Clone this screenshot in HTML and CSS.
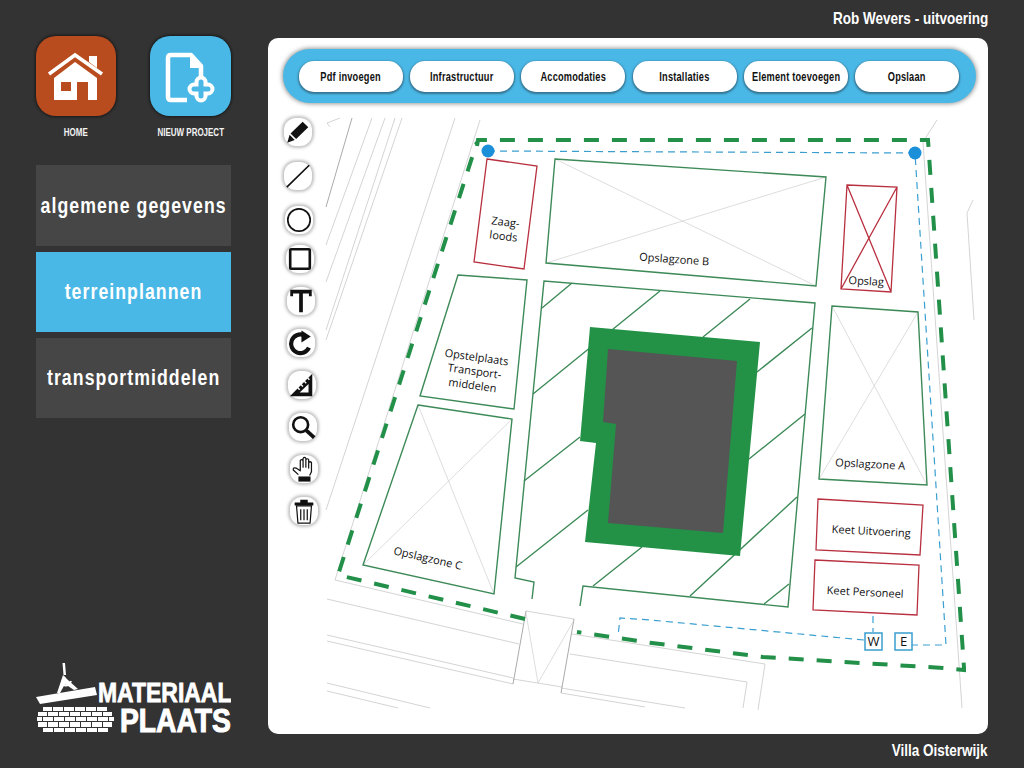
FILE: index.html
```html
<!DOCTYPE html>
<html lang="nl">
<head>
<meta charset="utf-8">
<title>Materiaalplaats - terreinplannen</title>
<link rel="stylesheet" href="styles.css">
</head>
<body>
<div class="app">
  <aside class="sidebar">
    <div class="quick">
      <a class="quick-item">
        <span class="tile tile-home">
          <svg viewBox="36 36 80 80" width="80" height="80">
            <path class="white" d="M54 78 L75 62 L97 78 V100 H88 V82 H77 V100 H54 Z M61 82 V91 H71 V82 Z" fill-rule="evenodd"/>
            <path class="white" d="M89 56 H97 V68 L89 62 Z"/>
            <path class="roof" d="M49 74 L75 55 L102 74"/>
          </svg>
        </span>
        <span class="quick-label"><span class="squeeze">HOME</span></span>
      </a>
      <a class="quick-item quick-new">
        <span class="tile tile-new">
          <svg viewBox="150 36 81 80" width="81" height="80">
            <path class="doc" d="M187 100 H171 Q168 100 168 97 V58 Q168 55 171 55 H191 L201 66 V77"/>
            <path class="white" d="M190 54 L203 68 H190 Z"/>
            <path class="plus-out" d="M201 82 V96 M194 89 H208"/>
            <path class="plus-in" d="M201 82 V96 M194 89 H208"/>
          </svg>
        </span>
        <span class="quick-label"><span class="squeeze">NIEUW PROJECT</span></span>
      </a>
    </div>
    <nav class="menu">
      <a class="menu-item menu-first"><span class="menu-text">algemene gegevens</span></a>
      <a class="menu-item is-active"><span class="menu-text">terreinplannen</span></a>
      <a class="menu-item"><span class="menu-text">transportmiddelen</span></a>
    </nav>
    <svg class="logo" viewBox="36 660 195 84" width="195" height="84">
      <g class="white">
        <path d="M36 697 L95 687 L97 695 L40 704 Z"/>
        <path d="M62.500 663 L65 663 L66 675 L63.500 675 Z"/>
        <path d="M63 675 L57 693 L60 693 L65 684 L74 690 L78 689 L68 680 Z"/>
        <path class="hook" d="M65 677 Q60 682 64 685 Q69 687 71 681"/>
        <g>
          <rect x="43" y="707" width="9" height="4"/><rect x="53" y="707" width="10" height="4"/><rect x="64" y="707" width="10" height="4"/><rect x="75" y="707" width="10" height="4"/><rect x="86" y="707" width="10" height="4"/><rect x="97" y="707" width="10" height="4"/>
          <rect x="38" y="712" width="9" height="4"/><rect x="48" y="712" width="10" height="4"/><rect x="59" y="712" width="10" height="4"/><rect x="70" y="712" width="10" height="4"/><rect x="81" y="712" width="10" height="4"/><rect x="92" y="712" width="10" height="4"/><rect x="103" y="712" width="9" height="4"/>
          <rect x="37" y="717" width="5" height="4"/><rect x="43" y="717" width="10" height="4"/><rect x="54" y="717" width="10" height="4"/><rect x="65" y="717" width="10" height="4"/><rect x="76" y="717" width="10" height="4"/><rect x="87" y="717" width="10" height="4"/><rect x="98" y="717" width="10" height="4"/><rect x="109" y="717" width="5" height="4"/>
          <rect x="38" y="722" width="9" height="5"/><rect x="48" y="722" width="10" height="5"/><rect x="59" y="722" width="10" height="5"/><rect x="70" y="722" width="10" height="5"/><rect x="81" y="722" width="10" height="5"/><rect x="92" y="722" width="10" height="5"/><rect x="103" y="722" width="9" height="5"/>
          <rect x="43" y="728" width="10" height="4"/><rect x="54" y="728" width="10" height="4"/><rect x="65" y="728" width="10" height="4"/><rect x="76" y="728" width="10" height="4"/><rect x="87" y="728" width="10" height="4"/><rect x="98" y="728" width="10" height="4"/>
        </g>
      </g>
      <text class="logo-text logo-one" transform="translate(98 702) scale(0.835 1)">MATERIAAL</text>
      <text class="logo-text logo-two" transform="translate(120 732) scale(0.83 1)">PLAATS</text>
    </svg>
  </aside>

  <header class="topline"><span class="edge-text">Rob Wevers - uitvoering</span></header>

  <main class="panel">
    <div class="toolbar-wrap">
      <div class="toolbar">
        <button class="pill"><span class="pill-text">Pdf invoegen</span></button>
        <button class="pill"><span class="pill-text">Infrastructuur</span></button>
        <button class="pill"><span class="pill-text">Accomodaties</span></button>
        <button class="pill"><span class="pill-text">Installaties</span></button>
        <button class="pill"><span class="pill-text">Element toevoegen</span></button>
        <button class="pill"><span class="pill-text">Opslaan</span></button>
      </div>
    </div>
    <div class="stage">
      <svg class="map" viewBox="268 103 720 631" width="720" height="631">
        <g class="ctx">
          <path class="ctx-dark" d="M352 118 L326 207"/>
          <path d="M327 123 L340 118 M327 123 L330 127"/>
          <path d="M372 118 L326 245 M385 118 L326 282 M395 118 L326 330 M402 118 L326 340"/>
          <path d="M455 118 L326 510"/>
          <path d="M480 120 L335 580 L523 624"/>
          <path d="M937 120 L923 142 L962 708"/>
          <path d="M973 200 L967 213 L974 320"/>
          <path d="M327 599 L519 644 M327 635 L513 678 M327 641 L513 684"/>
          <path d="M327 683 L430 708 M327 691 L398 708"/>
          <path d="M526 611 L574 619 M513 679 L562 687"/>
          <path class="ctx-dark" d="M526 611 L513 684 M574 619 L561 693"/>
          <path class="ctx-light" d="M526 613 L538 683 L574 620"/>
          <path d="M572 634 L765 664 L758 710 M570 654 L747 682 L743 708"/>
          <path d="M561 688 L685 708 M561 693 L645 707"/>
          <path class="ctx-light" d="M555 159 L816 286 M826 177 L546 263"/>
          <path class="ctx-light" d="M832 306 L927 485 M918 312 L819 479"/>
          <path class="ctx-light" d="M418 405 L494 594 M512 419 L363 565"/>
        </g>

        <g class="zone">
          <path d="M555 159 L826 177 L816 286 L546 263 Z"/>
          <path d="M832 306 L918 312 L927 485 L819 479 Z"/>
          <path d="M458 275 L527 280 L514 409 L420 396 Z"/>
          <path d="M418 405 L512 419 L494 594 L363 565 Z"/>
          <path d="M532 599 L534 582 L515 578 L544 281 L815 303 L788 607 L583 586 L580 606"/>
          <path d="M542 308 L572 283 M533 394 L660 291 M703 337 L750 299 M757 372 L812 328 M524 481 L580 437 M516 567 L588 510 M593 586 L642 547 M749 459 L805 414 M690 596 L797 497 M764 604 L789 584"/>
        </g>

        <path class="building" d="M590 327 L760 342 L740 556 L585 542 L596 443 L580 441 Z"/>
        <path class="core" d="M608 349 L737 361 L723 533 L608 523 L616 424 L603 422 Z"/>

        <g class="shed">
          <path d="M487 159 L537 166 L524 269 L474 262 Z"/>
          <path d="M847 185 L897 187 L891 292 L841 289 Z M847 185 L891 292 M897 187 L841 289"/>
          <path d="M818 499 L923 505 L920 555 L816 550 Z"/>
          <path d="M815 560 L919 565 L917 615 L813 610 Z"/>
        </g>

        <path class="fence" d="M477 146 L478 140 H926 L928 140 L964 668 V670 L943 668 L763 657 L652 643 L577 632"/>
        <path class="fence" d="M525 619 L338 575 L477 142"/>

        <path class="route" d="M488 151 L915 153 L946 645 L912 645"/>
        <path class="route" d="M864 640 L650 620 L620 618 L618 636"/>
        <path class="route" d="M873 616 L873 632"/>
        <circle class="pin" cx="488" cy="151" r="6.500"/>
        <circle class="pin" cx="915" cy="153" r="6.500"/>
        <rect class="box" x="865" y="633" width="17" height="17"/>
        <rect class="box" x="895" y="633" width="17" height="17"/>

        <g class="label">
          <text class="box-text" x="873.500" y="646">W</text>
          <text class="box-text" x="903.500" y="646">E</text>
          <text transform="translate(505 226) rotate(7)">Zaag-</text>
          <text transform="translate(503 240) rotate(7)">loods</text>
          <text transform="translate(674 263) rotate(4)">Opslagzone B</text>
          <text transform="translate(866 285) rotate(3)">Opslag</text>
          <text transform="translate(870 468) rotate(3)">Opslagzone A</text>
          <text transform="translate(476 361) rotate(8)">Opstelplaats</text>
          <text transform="translate(474 375) rotate(8)">Transport-</text>
          <text transform="translate(472 389) rotate(8)">middelen</text>
          <text transform="translate(427 562) rotate(13)">Opslagzone C</text>
          <text transform="translate(871 535) rotate(3)">Keet Uitvoering</text>
          <text transform="translate(865 596) rotate(3)">Keet Personeel</text>
        </g>
      </svg>

      <div class="tools">
        <button class="tool t1"><svg viewBox="0 0 30 30"><path class="ink" d="M20 4 L26 10 L13 22.500 L7 16.500 Z"/><path class="ink" d="M6 18 L11.500 23.500 L3.500 26.500 Z"/></svg></button>
        <button class="tool t2"><svg viewBox="0 0 30 30"><path class="ln" d="M3 27 L27 3.500"/></svg></button>
        <button class="tool t3"><svg viewBox="0 0 30 30"><circle class="ln" cx="15" cy="15" r="12"/></svg></button>
        <button class="tool t4"><svg viewBox="0 0 30 30"><rect class="ln2" x="4.500" y="4.500" width="21" height="21" rx="1"/></svg></button>
        <button class="tool t5"><svg viewBox="0 0 30 30"><path class="ink" d="M3.500 3 H26.500 V10 H23.500 V7 H17 V27 H13 V7 H6.500 V10 H3.500 Z"/></svg></button>
        <button class="tool t6"><svg viewBox="0 0 30 30"><path class="arc" d="M23.500 20 A10 10 0 1 1 18 6.500"/><path class="ink" d="M15.500 1.500 L25.500 8 L15.500 14.500 Z"/></svg></button>
        <button class="tool t7"><svg viewBox="0 0 30 30"><path class="ink" fill-rule="evenodd" d="M26 3 V27 H2 Z M22 14 L12.500 23 H22 Z"/><path class="notch" d="M21 7.500 L23 9.500 M17.500 11 L19.500 13 M14 14.500 L16 16.500 M10.500 18 L12.500 20"/></svg></button>
        <button class="tool t8"><svg viewBox="0 0 30 30"><circle class="ln2" cx="12.500" cy="12.500" r="8"/><path class="thick" d="M18.500 18.500 L27 26.500"/></svg></button>
        <button class="tool t9"><svg viewBox="0 0 30 30"><path class="thin" d="M9 21 L3.500 16 Q3 13 6.500 14 L11 17 V6 Q12.500 4 14 6 V13 V3.500 Q15.500 1.500 17 3.500 V13 V5 Q18.500 3 20 5 V14 V8 Q21.500 6.500 23 8 V18 L21 22"/><path class="ink" d="M9 23 H22 V28.500 H9 Z"/></svg></button>
        <button class="tool t10"><svg viewBox="0 0 30 30"><path class="thin" d="M7 9.500 H23 L21.500 28 H8.500 Z M11.500 13 V25 M15 13 V25 M18.500 13 V25"/><path class="ink" d="M5 6 H11 V3 H19 V6 H25 V9 H5 Z"/></svg></button>
      </div>
    </div>
  </main>

  <footer class="bottomline"><span class="edge-text">Villa Oisterwijk</span></footer>
</div>
</body>
</html>
```

FILE: styles.css
```css
* { box-sizing: border-box; }

html, body {
  margin: 0;
  height: 100%;
  background: #333333;
}

body {
  font-family: "Liberation Sans", Arial, sans-serif;
  overflow: hidden;
}

.app {
  display: grid;
  grid-template-columns: 268px 720px;
  grid-template-rows: 38px 696px 34px;
  width: 1024px;
  height: 768px;
}

.sidebar {
  grid-column: 1;
  grid-row: 1 / 4;
  display: flex;
  flex-direction: column;
  padding: 36px 37px 24px 36px;
}

.quick {
  display: flex;
  justify-content: space-between;
}

.quick-item {
  display: flex;
  flex-direction: column;
  align-items: center;
  gap: 10px;
  width: 80px;
}

.quick-new { width: 81px; }

.tile {
  display: block;
  width: 80px;
  height: 80px;
  border-radius: 20px;
  box-shadow: 0 0 3px 1px rgba(0, 0, 0, 0.55);
}

.tile svg { display: block; }

.tile-home { background: #b84c1e; }
.tile-new { background: #4ab8e6; width: 81px; }

.quick-label {
  display: flex;
  justify-content: center;
  width: 100%;
  color: #f4f4f4;
  font-size: 10.500px;
  font-weight: 700;
  line-height: 12px;
  white-space: nowrap;
}

.squeeze {
  flex: none;
  display: inline-block;
  transform: scaleX(0.76);
}

.white { fill: #ffffff; }
.roof { fill: none; stroke: #ffffff; stroke-width: 3.500; stroke-linejoin: miter; }
.doc { fill: none; stroke: #ffffff; stroke-width: 4.500; stroke-linejoin: round; }
.plus-out { fill: none; stroke: #ffffff; stroke-width: 13; stroke-linecap: round; }
.plus-in { fill: none; stroke: #4ab8e6; stroke-width: 5; stroke-linecap: round; }

.menu {
  display: flex;
  flex-direction: column;
  gap: 6px;
  margin-top: 27px;
}

.menu-item {
  display: flex;
  align-items: center;
  justify-content: center;
  height: 80px;
  background: #464646;
  color: #ffffff;
  font-size: 22px;
  font-weight: 700;
  letter-spacing: 1.300px;
  white-space: nowrap;
}

.menu-first { height: 81px; }

.menu-text {
  flex: none;
  display: inline-block;
  transform: scaleX(0.805);
}

.menu-item.is-active { background: #4ab8e6; }

.logo {
  display: block;
  margin-top: auto;
}

.hook { fill: none; stroke: #ffffff; stroke-width: 2; }

.logo-text {
  fill: #ffffff;
  stroke: #ffffff;
  font-weight: 700;
}

.logo-one { font-size: 27.500px; stroke-width: 0.800; }
.logo-two { font-size: 34px; stroke-width: 1.100; }

.topline,
.bottomline {
  grid-column: 2;
  color: #ffffff;
  font-size: 17px;
  font-weight: 700;
  text-align: right;
  white-space: nowrap;
}

.edge-text {
  display: inline-block;
  transform: scaleX(0.795);
  transform-origin: right center;
}

.topline {
  grid-row: 1;
  line-height: 37px;
}

.bottomline {
  grid-row: 3;
  line-height: 33px;
}

.panel {
  grid-column: 2;
  grid-row: 2;
  display: flex;
  flex-direction: column;
  background: #ffffff;
  border-radius: 10px;
  overflow: hidden;
}

.toolbar-wrap {
  height: 65px;
  padding: 11px 12px 0 15px;
}

.toolbar {
  display: flex;
  justify-content: space-between;
  align-items: center;
  height: 54px;
  padding: 0 17px 0 16px;
  background: #4ab8e6;
  border-radius: 27px;
  box-shadow: 0 0 4px 1px rgba(70, 70, 70, 0.55);
}

.pill {
  display: flex;
  align-items: center;
  justify-content: center;
  width: 104px;
  height: 31px;
  padding: 0;
  border: 0;
  border-radius: 15px;
  background: #ffffff;
  box-shadow: 0 1px 2px 1px rgba(40, 70, 90, 0.6);
  color: #111111;
  font-family: inherit;
  font-size: 13px;
  font-weight: 700;
  letter-spacing: 0.300px;
  white-space: nowrap;
}

.pill-text {
  flex: none;
  display: inline-block;
  transform: scaleX(0.71);
}

.stage {
  position: relative;
  flex: 1;
}

.map {
  display: block;
}

.ctx path { fill: none; stroke: #c2c2c2; stroke-width: 0.700; }
.ctx .ctx-dark { stroke: #858585; }
.ctx .ctx-light { stroke: #cfcfcf; }

.zone, .zone path { fill: none; stroke: #3d8a58; stroke-width: 1.400; }

.building { fill: #239247; }
.core { fill: #555555; }

.shed path { fill: none; stroke: #b8303f; stroke-width: 1.300; }

.fence {
  fill: none;
  stroke: #23904a;
  stroke-width: 4;
  stroke-dasharray: 15 13;
}

.route {
  fill: none;
  stroke: #3a9fd0;
  stroke-width: 1.200;
  stroke-dasharray: 7 5;
}

.pin { fill: #1b8fd8; }

.box {
  fill: #ffffff;
  stroke: #3a9fd0;
  stroke-width: 1.500;
}

.label text {
  fill: #111111;
  font-family: "Open Sans", "Noto Sans", sans-serif;
  font-size: 11px;
  text-anchor: middle;
}

.label .box-text { font-size: 13px; }

.tools {
  position: absolute;
  top: 15px;
  left: 16px;
  display: flex;
  flex-direction: column;
}

.tool {
  display: block;
  width: 28px;
  height: 28px;
  margin-bottom: 14px;
  padding: 0;
  border: 0;
  border-radius: 12px;
  background: #ffffff;
  box-shadow: 0 0 3px 2px rgba(170, 170, 170, 0.7);
}

.tool svg {
  display: block;
  width: 28px;
  height: 28px;
}

.t1 { margin-bottom: 16px; }
.t2 { margin-bottom: 16px; }
.t3 { margin-left: 1px; margin-bottom: 11px; }
.t4 { margin-left: 2px; }
.t5 { margin-left: 3px; }
.t6 { margin-left: 3px; }
.t7 { margin-left: 4px; }
.t8 { margin-left: 5px; }
.t9 { margin-left: 6px; }
.t10 { margin-left: 6px; }

.ink { fill: #111111; }
.ln { fill: none; stroke: #111111; stroke-width: 1.800; }
.ln2 { fill: none; stroke: #111111; stroke-width: 2.800; }
.thick { fill: none; stroke: #111111; stroke-width: 4; }
.arc { fill: none; stroke: #111111; stroke-width: 4.500; }
.thin { fill: none; stroke: #111111; stroke-width: 1.300; stroke-linejoin: round; }
.notch { fill: none; stroke: #ffffff; stroke-width: 1.500; }
```
